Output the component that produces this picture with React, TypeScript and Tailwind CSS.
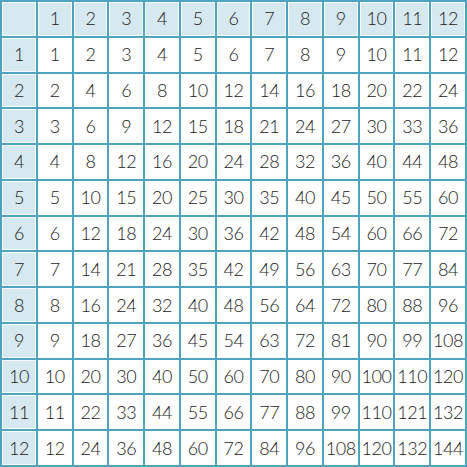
const nums = Array.from({ length: 12 }, (_, i) => i + 1);

const HeadCell = ({ label }: { label?: number }) => (
  <div className="flex items-center justify-center bg-[#d6e8f0] border border-white/80 text-[#222]">
    {label}
  </div>
);

const Cell = ({ value }: { value: number }) => (
  <div className="flex items-center justify-center bg-white text-[#222]">{value}</div>
);

const App = () => {
  return (
    <div className="w-[467px] h-[467px] bg-[#4ea3bd] p-[2px]">
      <div
        className="grid grid-cols-13 grid-rows-13 gap-[2px] w-full h-full text-[18px] font-light tracking-tight"
        style={{ fontFamily: "Lato, 'Open Sans', sans-serif" }}
      >
        <HeadCell />
        {nums.map((n) => (
          <HeadCell key={`h${n}`} label={n} />
        ))}
        {nums.map((row) => (
          <>
            <HeadCell key={`r${row}`} label={row} />
            {nums.map((col) => (
              <Cell key={`${row}-${col}`} value={row * col} />
            ))}
          </>
        ))}
      </div>
    </div>
  );
};

export default App;
